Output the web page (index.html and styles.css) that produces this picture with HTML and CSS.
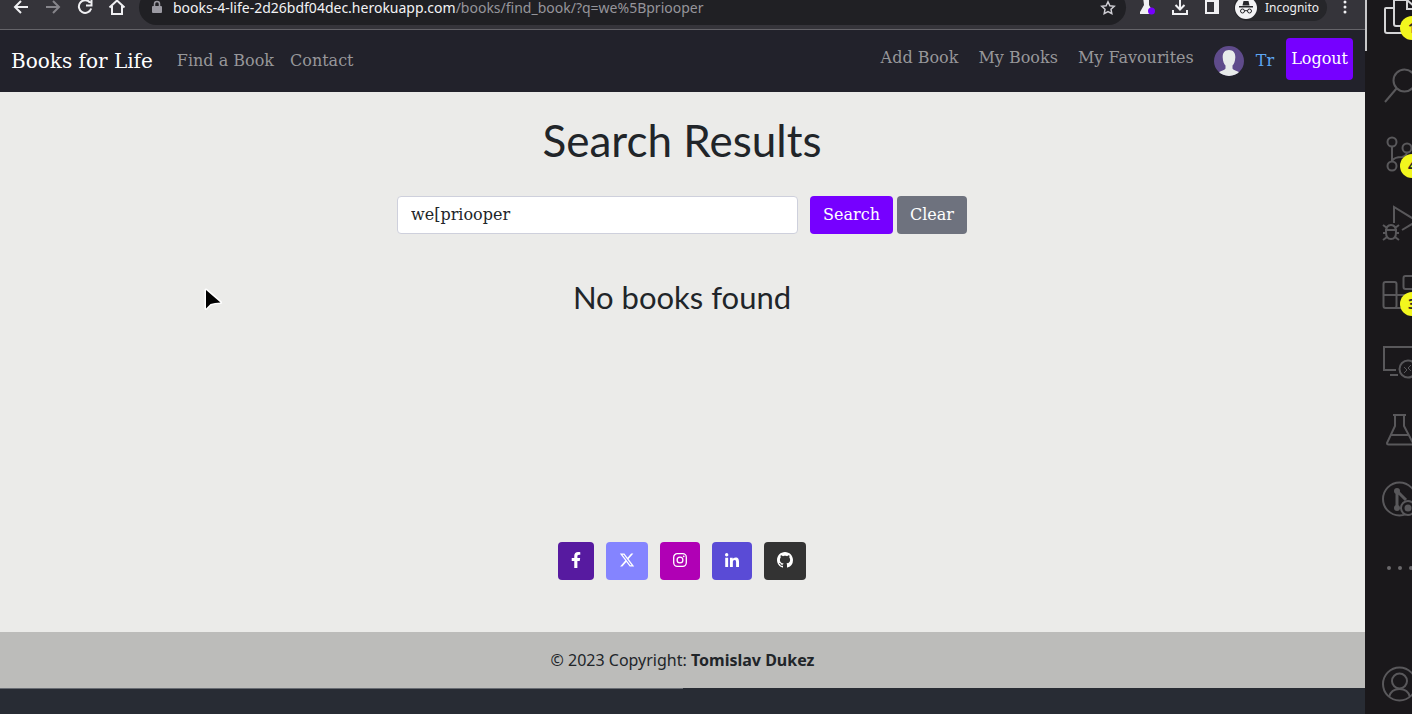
FILE: index.html
```html
<!DOCTYPE html>
<html lang="en">
<head>
<meta charset="utf-8">
<title>Books for Life</title>
<meta name="viewport" content="width=device-width, initial-scale=1">
<link rel="stylesheet" href="styles.css">
</head>
<body class="desktop">
<div class="browser">
  <div class="toolbar">
    <button class="tool" aria-label="Back"><svg width="20" height="20" viewBox="0 0 20 20"><path d="M17 10H4M10 4l-6 6 6 6"/></svg></button>
    <button class="tool tool-dim" aria-label="Forward"><svg width="20" height="20" viewBox="0 0 20 20"><path d="M3 10h13M10 4l6 6-6 6"/></svg></button>
    <button class="tool" aria-label="Reload"><svg width="20" height="20" viewBox="0 0 20 20"><path d="M15 5.500A6.300 6.300 0 1 0 16.200 11.500M16.500 3v5.500H11"/></svg></button>
    <button class="tool" aria-label="Home"><svg width="20" height="20" viewBox="0 0 20 20"><path d="M2.500 10.500 10 3.500l7.500 7M5 9v8h10V9"/></svg></button>
    <div class="address">
      <svg class="lock" width="12" height="16" viewBox="0 0 12 16"><path d="M2 6h8a1 1 0 0 1 1 1v5a1 1 0 0 1-1 1H2a1 1 0 0 1-1-1V7a1 1 0 0 1 1-1z" fill="#9b9aa2"/><path d="M3.500 7V4a2.500 2.500 0 0 1 5 0v3" fill="none" stroke="#9b9aa2" stroke-width="1.500"/></svg>
      <span class="url"><span class="host">books-4-life-2d26bdf04dec.herokuapp.com</span>/books/find_book/?q=we%5Bpriooper</span>
      <button class="star" aria-label="Bookmark"><svg width="16" height="16" viewBox="0 0 16 16"><path d="m8 1.800 1.900 4 4.300.5-3.200 3 .8 4.400L8 11.600l-3.800 2.100.8-4.400-3.200-3 4.300-.5z" fill="none" stroke="#cfced4" stroke-width="1.500"/></svg></button>
    </div>
    <button class="tool" aria-label="Labs extension"><svg width="20" height="20" viewBox="0 0 20 20"><path class="solid" d="M5 0h6v8l4 7v2H2v-2l4-7z"/><circle cx="13.500" cy="14" r="3.500" fill="#7600ff" stroke="none"/></svg></button>
    <button class="tool" aria-label="Downloads"><svg width="20" height="20" viewBox="0 0 20 20"><path d="M10 1v11M5.500 8l4.500 4.500L14.500 8M3 13v4h14v-4"/></svg></button>
    <button class="tool" aria-label="Side panel"><svg width="20" height="20" viewBox="0 0 20 20"><path d="M4 4h12v12H4z"/><path class="solid" d="M12 3h5v14h-5z"/></svg></button>
    <button class="incognito">
      <svg width="22" height="22" viewBox="0 0 22 22"><circle cx="11" cy="11" r="11" fill="#f2f2f4"/><path d="M7.500 8.500 8.500 4h5l1 4.500zM4 9h14v1.500H4z" fill="#26262a"/><path d="M9.500 14a2 2 0 1 1-4 0 2 2 0 0 1 4 0zm7 0a2 2 0 1 1-4 0 2 2 0 0 1 4 0zm-7 0q1.500-1 3 0" fill="none" stroke="#26262a"/></svg>
      Incognito
    </button>
    <button class="tool kebab" aria-label="Menu"><svg width="20" height="20" viewBox="0 0 20 20"><g class="solid"><circle cx="10" cy="5" r="1.500"/><circle cx="10" cy="10" r="1.500"/><circle cx="10" cy="15" r="1.500"/></g></svg></button>
  </div>

  <header class="navbar">
    <a class="brand" href="#">Books for Life</a>
    <nav class="links">
      <a href="#">Find a Book</a>
      <a href="#">Contact</a>
    </nav>
    <nav class="links links-user">
      <a href="#">Add Book</a>
      <a href="#">My Books</a>
      <a href="#">My Favourites</a>
    </nav>
    <a class="profile" href="#">
      <svg width="30" height="30" viewBox="0 0 30 30"><clipPath id="face"><circle cx="15" cy="15" r="15"/></clipPath><g clip-path="url(#face)"><path d="M0 0h30v30H0z" fill="#5f4b8b"/><path d="M15 4c4.500 0 6.500 3 6.300 7.500-.2 4-1.300 6.500-2.800 8v3c1 2 5.500 2 8 5V31h-23v-3.500c2.500-3 7-3 8-5v-3c-1.500-1.500-2.600-4-2.800-8C8.500 7 10.500 4 15 4z" fill="#e8ebea"/></g></svg>
      <span>Tr</span>
    </a>
    <button class="btn btn-primary btn-logout">Logout</button>
  </header>

  <main class="page">
    <h1 class="title">Search Results</h1>
    <form class="search">
      <input class="field" type="text" aria-label="Search books" value="we[priooper">
      <div class="actions">
        <button class="btn btn-primary" type="button">Search</button>
        <button class="btn btn-secondary" type="button">Clear</button>
      </div>
    </form>
    <h2 class="empty">No books found</h2>
    <div class="social">
      <a class="btn facebook" href="#" aria-label="Facebook"><svg width="10" height="16" viewBox="0 0 320 512"><path d="M279.140 288l14.220-92.660h-88.910v-60.130c0-25.350 12.420-50.060 52.240-50.060h40.420V6.260S260.430 0 225.360 0c-73.220 0-121.080 44.380-121.080 124.720v70.620H22.890V288h81.390v224h100.170V288z"/></svg></a>
      <a class="btn twitter" href="#" aria-label="X"><svg width="16" height="16" viewBox="0 0 512 512"><path d="M389.200 48h70.600L305.600 224.200 487 464H345L233.700 318.600 106.500 464H35.800L200.700 275.500 26.800 48H172.400L272.900 180.900 389.200 48zM364.400 421.800h39.100L151.100 88h-42L364.400 421.800z"/></svg></a>
      <a class="btn instagram" href="#" aria-label="Instagram"><svg width="14" height="16" viewBox="0 0 14 16"><rect x=".7" y="1.700" width="12.600" height="12.600" rx="3.500" fill="none" stroke="#fff" stroke-width="1.300"/><circle cx="7" cy="8" r="2.900" fill="none" stroke="#fff" stroke-width="1.300"/><circle cx="10.700" cy="4.300" r=".9"/></svg></a>
      <a class="btn linkedin" href="#" aria-label="LinkedIn"><svg width="14" height="16" viewBox="0 -32 448 512"><path d="M100.280 448H7.400V148.900h92.880zM53.790 108.100C24.090 108.100 0 83.500 0 53.800a53.790 53.790 0 0 1 107.580 0c0 29.700-24.100 54.300-53.790 54.300zM447.900 448h-92.680V302.400c0-34.700-.7-79.200-48.290-79.200-48.290 0-55.690 37.700-55.690 76.700V448h-92.780V148.900h89.080v40.800h1.300c12.400-23.500 42.690-48.300 87.880-48.300 94 0 111.280 61.900 111.280 142.300V448z"/></svg></a>
      <a class="btn github" href="#" aria-label="GitHub"><svg width="16" height="16" viewBox="0 0 16 16"><path d="M8 0C3.580 0 0 3.580 0 8c0 3.540 2.290 6.530 5.470 7.590.4.070.55-.17.55-.38 0-.19-.01-.82-.01-1.490-2.010.37-2.530-.49-2.690-.94-.09-.23-.48-.94-.82-1.130-.28-.15-.68-.52-.01-.53.63-.01 1.080.58 1.230.82.72 1.210 1.870.87 2.330.66.070-.52.28-.87.51-1.070-1.780-.2-3.640-.89-3.640-3.950 0-.87.31-1.590.82-2.150-.08-.2-.36-1.020.08-2.120 0 0 .67-.21 2.200.82.64-.18 1.320-.27 2-.27s1.360.09 2 .27c1.530-1.040 2.200-.82 2.200-.82.44 1.100.16 1.920.08 2.120.51.56.82 1.270.82 2.150 0 3.070-1.870 3.750-3.650 3.950.29.25.54.73.54 1.480 0 1.070-.01 1.930-.01 2.200 0 .21.15.46.55.38A8.010 8.010 0 0 0 16 8c0-4.420-3.580-8-8-8z"/></svg></a>
    </div>
  </main>

  <footer class="copyright"><p>© 2023 Copyright: <strong>Tomislav Dukez</strong></p></footer>
  <div class="editor-edge"><div class="edge-line"></div></div>
  <svg class="cursor" width="20" height="24" viewBox="0 0 20 24"><path d="M2 2v18.500l4.500-4.500q4-1.500 10-1.500z" stroke="#fff" stroke-width="3" stroke-linejoin="round"/><path d="M2 2v18.500l4.500-4.500q4-1.500 10-1.500z"/></svg>
</div>

<aside class="activity">
  <button class="item item-active" aria-label="Explorer"><svg width="36" height="36" viewBox="0 0 36 36"><path d="M11 10H4q-1 0-1 1v22q0 2 2 2h18v-6M12 2h13l9 8v18H14q-2 0-2-2zM25 1v10h9"/></svg><span class="badge">1</span></button>
  <button class="item" aria-label="Search"><svg width="36" height="36" viewBox="0 0 36 36"><circle cx="22.500" cy="13.500" r="11"/><path d="M14.500 21.500 3 35"/></svg></button>
  <button class="item" aria-label="Source control"><svg width="36" height="36" viewBox="0 0 36 36"><circle cx="10" cy="6" r="4.500"/><circle cx="10" cy="30" r="4.500"/><circle cx="25" cy="12" r="4.500"/><path d="M10 10.500v15M25 16.500q-1 4-5 4.500-8 0-10 4"/></svg><span class="badge">4</span></button>
  <button class="item" aria-label="Run and debug"><svg width="36" height="36" viewBox="0 0 36 36"><path d="M12 18V2l23 14-15 9M4 27q0-7 5-7t5 7-5 7-5-7zM3 25h12M1 28h3m10 0h3M1 20l4 3m8 0 4-3M1 35l4-3m8 0 4 3"/></svg></button>
  <button class="item" aria-label="Extensions"><svg width="36" height="36" viewBox="0 0 36 36"><rect x="1.500" y="8" width="13" height="26" rx="2"/><path d="M2 21h26v11q0 2-2 2H12"/><rect x="21.500" y="2" width="13" height="13" rx="2"/></svg><span class="badge">3</span></button>
  <button class="item" aria-label="Remote explorer"><svg width="36" height="36" viewBox="0 0 36 36"><path d="M14 27H2V4h32v10M8 32h8"/><circle cx="26" cy="26" r="8.500"/><path d="m22 24 3 3-3 3m7-8-3 3 3 3" class="thin"/></svg></button>
  <button class="item" aria-label="Testing"><svg width="36" height="36" viewBox="0 0 36 36"><path d="M11 3h13M13 3v11L5 31q0 1.500 1.500 1.500h23q1.500 0 1.500-1.500L22 14V3M9 23h17"/></svg></button>
  <button class="item" aria-label="Git graph"><svg width="36" height="36" viewBox="0 0 36 36"><circle cx="17.500" cy="18" r="16.500"/><path d="M15 11v16M15 10l9 9" stroke-width="3"/><circle cx="15" cy="10" r="3" class="fill"/><circle cx="15" cy="27" r="3" class="fill"/><circle cx="26" cy="27" r="7" class="cut"/><circle cx="26" cy="27" r="3.500" class="fill"/></svg></button>
  <button class="item" aria-label="More"><svg width="36" height="36" viewBox="0 0 36 36"><circle cx="7" cy="18" r="2" class="fill dot"/><circle cx="18" cy="18" r="2" class="fill dot"/><circle cx="29" cy="18" r="2" class="fill dot"/></svg></button>
  <button class="item item-account" aria-label="Account"><svg width="36" height="36" viewBox="0 0 36 36"><circle cx="17.500" cy="18" r="16.500"/><circle cx="17.500" cy="15" r="7.500"/><path d="M7 31q2-8 10.500-8T28 31"/></svg></button>
</aside>
</body>
</html>
```

FILE: styles.css
```css
* { box-sizing: border-box; }

body, h1, h2, p { margin: 0; }

button, input { font: inherit; color: inherit; }

button { border: 0; background: none; padding: 0; cursor: pointer; }

a { color: inherit; text-decoration: none; }

svg { display: block; flex: none; }

.desktop {
  display: flex;
  height: 100vh;
  overflow: hidden;
  background: #1a181b;
  color: #212529;
  font: 16px/24px "DejaVu Serif", serif;
}

.browser {
  position: relative;
  display: flex;
  flex: 1;
  flex-direction: column;
  min-width: 0;
  background: #ebebe9;
}

/* Browser toolbar, cut off by the top of the window */
.toolbar {
  display: flex;
  flex: none;
  align-items: flex-end;
  gap: 12px;
  height: 30px;
  padding: 0 12px 4px 11px;
  background: #35343a;
  border-bottom: 1px solid #656469;
  font-family: "Noto Sans", sans-serif;
}

.tool { margin-bottom: 8px; }

.tool svg { fill: none; stroke: #f0f0f3; stroke-width: 2; }

.tool .solid { fill: #f0f0f3; stroke: none; }

.tool-dim svg { stroke: #86858b; }

.address {
  display: flex;
  flex: 1;
  align-items: center;
  gap: 10px;
  height: 35px;
  padding: 0 10px 0 12px;
  border-radius: 18px;
  background: #202024;
  color: #96959b;
  font-size: 14px;
  line-height: 20px;
}

.url { flex: 1; white-space: nowrap; }

.host { color: #f3f3f5; }

.incognito {
  display: flex;
  align-items: center;
  gap: 8px;
  height: 27px;
  margin-bottom: 4px;
  padding: 0 8px 0 1px;
  border-radius: 14px;
  background: #26262a;
  color: #eeeef0;
  font-size: 12px;
  line-height: 16px;
}

.kebab { margin-left: -2px; }

.incognito, .kebab { margin-right: -2px; }

.navbar {
  display: flex;
  flex: none;
  align-items: center;
  height: 62px;
  padding: 0 12px 0 11px;
  background: #22222b;
  color: #97979a;
}

.brand { margin-right: 24px; color: #fff; font-size: 20px; }

.links { display: flex; gap: 16px; white-space: nowrap; }

.links-user { gap: 20px; margin: 0 20px 6px auto; }

.profile { display: flex; align-items: center; gap: 12px; margin-right: 12px; color: #5ea6f2; }

.btn {
  display: inline-flex;
  align-items: center;
  justify-content: center;
  height: 38px;
  padding: 0 13px;
  border-radius: 4px;
  color: #fff;
}

.btn svg { fill: #fff; }

.btn-primary { background: #7600ff; }

.btn-secondary { background: #6e727e; }

.btn-logout { height: 42px; padding: 0 5px; margin-bottom: 4px; }

.page {
  display: flex;
  flex: 1;
  flex-direction: column;
  align-items: center;
  padding: 24px 13px 52px 12px;
}

.title { font: 400 44px/48px Lato, sans-serif; }

.search { display: flex; gap: 12px; width: 100%; max-width: 570px; margin-top: 32px; }

.field {
  flex: 1;
  min-width: 0;
  height: 38px;
  padding: 0 13px 2px;
  border: 1px solid #ced0dc;
  border-radius: 4px;
  background: #fff;
}

.actions { display: flex; gap: 4px; }

.empty { margin-top: 45px; font: 400 31px/36px Lato, sans-serif; }

.social { display: flex; gap: 12px; margin-top: auto; }

.social .btn { padding-bottom: 2px; }

.facebook { background: #571aa0; }

.twitter { background: #8484ff; }

.instagram { background: #b000b5; }

.linkedin { background: #5a4bd6; }

.github { background: #333; }

.copyright {
  flex: none;
  padding: 16px;
  background: #bcbcba;
  font-family: "Noto Sans", sans-serif;
  text-align: center;
}

.editor-edge { flex: none; height: 26px; background: #282c34; }

.edge-line { width: 50%; height: 1px; background: #686c73; }

.cursor { position: absolute; left: 204px; top: 288px; }

/* Editor activity bar, cut off by the right side of the window */
.activity {
  display: flex;
  flex: none;
  flex-direction: column;
  gap: 33px;
  width: 47px;
  padding: 0 0 12px 17px;
  overflow: hidden;
  background: linear-gradient(#c8c8ca, #c8c8ca) 0 0 / 2px 51px no-repeat #1a181b;
}

.item { position: relative; flex: none; width: 36px; height: 36px; }

.item svg { fill: none; stroke: #59585b; stroke-width: 2; }

.item .thin { stroke-width: 1; }

.item .fill { fill: #59585b; stroke: none; }

.item .dot { fill: #69686b; }

.item .cut { fill: #1a181b; }

.item-active { margin-top: -2px; }

.item-active svg { stroke: #d4d4d6; }

.item-account { margin-top: auto; }

.badge {
  position: absolute;
  top: 18px;
  left: 18px;
  width: 24px;
  height: 24px;
  border-radius: 12px;
  background: #f2f71e;
  color: #2a2a20;
  font: 700 14px/24px "Noto Sans", sans-serif;
  text-align: center;
}
```
